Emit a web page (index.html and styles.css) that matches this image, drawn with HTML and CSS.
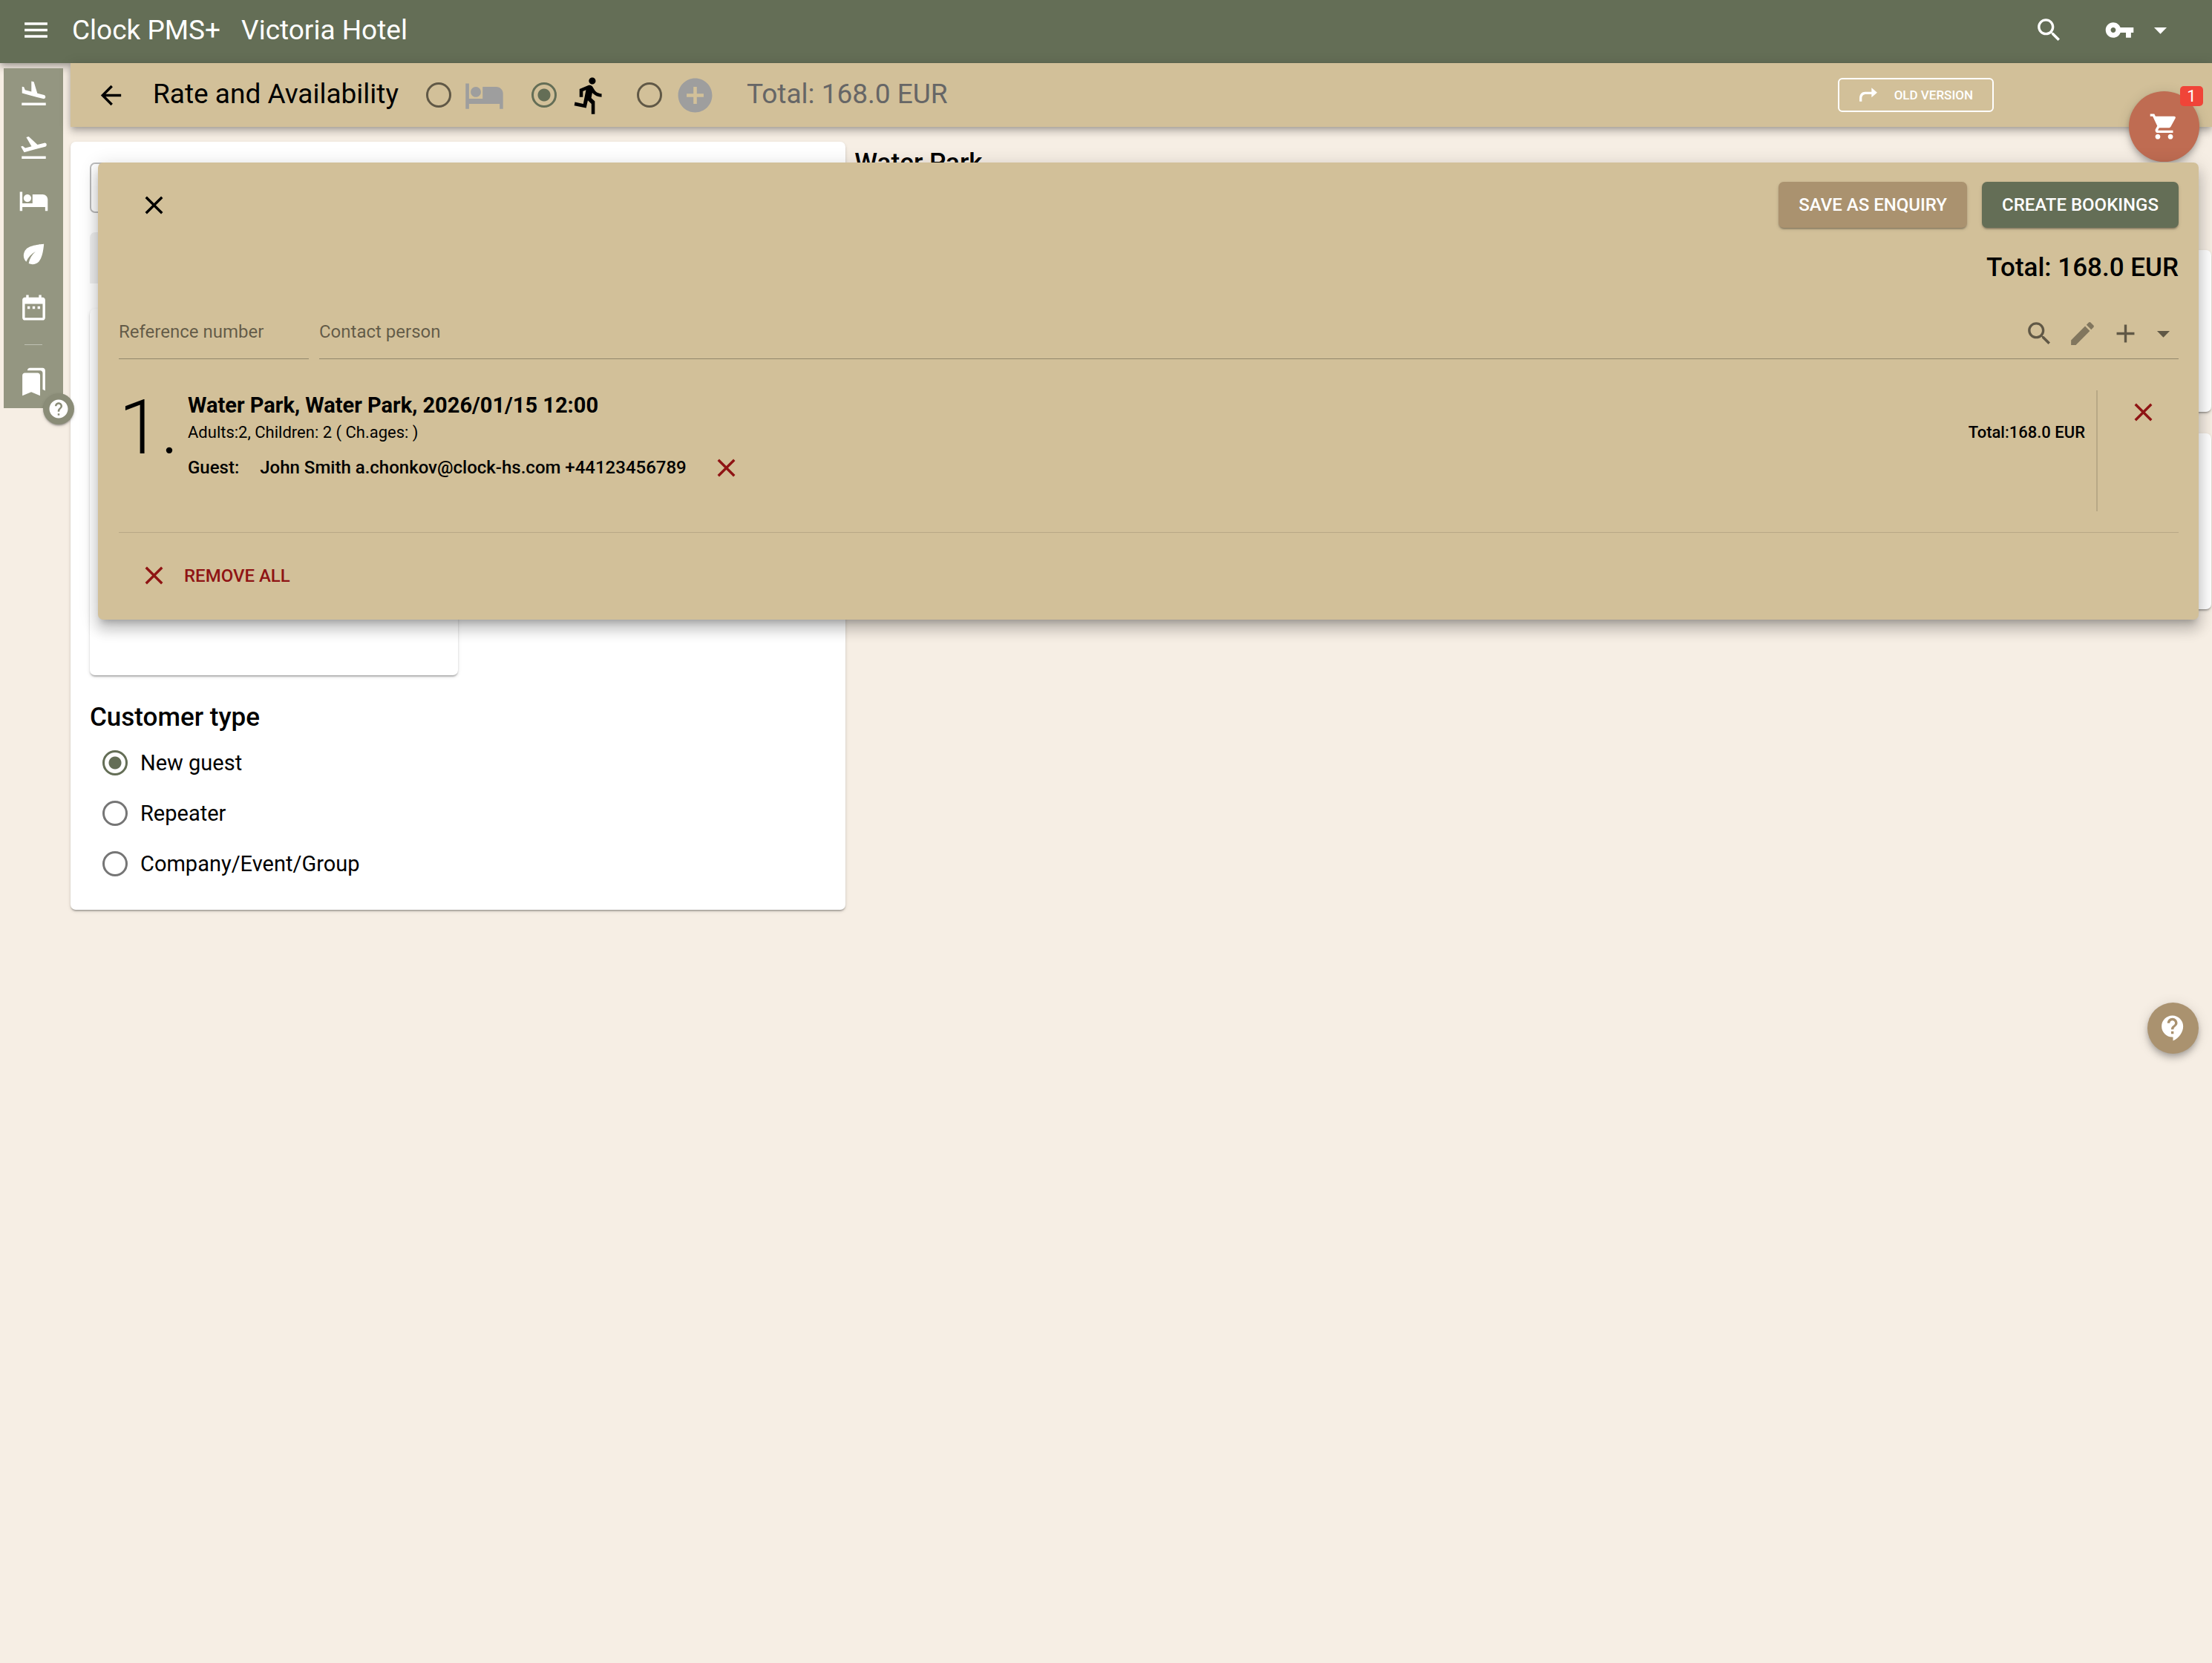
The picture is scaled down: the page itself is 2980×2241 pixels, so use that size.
FILE: index.html
```html
<!DOCTYPE html>
<html lang="en">
<head>
    <meta charset="UTF-8">
    <meta name="viewport" content="width=device-width, initial-scale=1.0">
    <title>Clock PMS+ - Rate and Availability</title>
    <link rel="stylesheet" href="styles.css">
</head>
<body>
    <!-- Shared icons -->
    <svg class="sprite" aria-hidden="true">
        <symbol id="i-menu" viewBox="0 0 24 24"><path d="M3 18h18v-2H3v2zm0-5h18v-2H3v2zm0-7v2h18V6H3z"/></symbol>
        <symbol id="i-search" viewBox="0 0 24 24"><path d="M15.5 14h-.79l-.28-.27C15.41 12.59 16 11.11 16 9.5 16 5.91 13.09 3 9.5 3S3 5.91 3 9.5 5.91 16 9.5 16c1.61 0 3.09-.59 4.23-1.57l.27.28v.79l5 4.99L20.49 19l-4.99-5zm-6 0C7.01 14 5 11.99 5 9.5S7.01 5 9.5 5 14 7.01 14 9.5 11.99 14 9.5 14z"/></symbol>
        <symbol id="i-key" viewBox="0 0 24 24"><path d="M12.65 10C11.83 7.67 9.61 6 7 6c-3.31 0-6 2.69-6 6s2.69 6 6 6c2.61 0 4.83-1.67 5.65-4H17v4h4v-4h2v-4H12.65zM7 14c-1.1 0-2-.9-2-2s.9-2 2-2 2 .9 2 2-.9 2-2 2z"/></symbol>
        <symbol id="i-drop" viewBox="0 0 24 24"><path d="M7 10l5 5 5-5z"/></symbol>
        <symbol id="i-back" viewBox="0 0 24 24"><path d="M20 11H7.83l5.59-5.59L12 4l-8 8 8 8 1.41-1.41L7.83 13H20v-2z"/></symbol>
        <symbol id="i-close" viewBox="0 0 24 24"><path d="M19 6.41L17.59 5 12 10.59 6.41 5 5 6.41 10.59 12 5 17.59 6.41 19 12 13.41 17.59 19 19 17.59 13.41 12z"/></symbol>
        <symbol id="i-land" viewBox="0 0 24 24"><path d="M2.5 19h19v2h-19zm7.18-5.73l4.35 1.16 5.31 1.42c.8.21 1.62-.26 1.84-1.06.21-.8-.26-1.62-1.06-1.84l-5.31-1.42-2.76-9.02L10.12 2v8.28L5.15 8.95l-.93-2.32-1.45-.39v5.17l1.6.43 5.31 1.43z"/></symbol>
        <symbol id="i-takeoff" viewBox="0 0 24 24"><path d="M2.5 19h19v2h-19zm19.57-9.36c-.21-.8-1.04-1.28-1.84-1.06L14.92 10l-6.9-6.43-1.93.51 4.14 7.17-4.97 1.33-1.97-1.54-1.45.39 1.82 3.16.77 1.33 1.6-.43 5.31-1.42 4.35-1.16L21 11.49c.81-.23 1.28-1.05 1.07-1.85z"/></symbol>
        <symbol id="i-bed" viewBox="0 0 24 24"><path d="M7 13c1.66 0 3-1.34 3-3S8.66 7 7 7s-3 1.34-3 3 1.34 3 3 3zm12-6h-8v7H3V5H1v15h2v-3h18v3h2v-9c0-2.21-1.79-4-4-4z"/></symbol>
        <symbol id="i-run" viewBox="0 0 24 24"><path d="M13.49 5.48c1.1 0 2-.9 2-2s-.9-2-2-2-2 .9-2 2 .9 2 2 2zm-3.6 13.9l1-4.4 2.1 2v6h2v-7.5l-2.1-2 .6-3c1.3 1.5 3.3 2.5 5.5 2.5v-2c-1.9 0-3.5-1-4.3-2.4l-1-1.6c-.4-.6-1-1-1.7-1-.3 0-.5.1-.8.1l-5.2 2.2v4.7h2v-3.4l1.8-.7-1.6 8.1-4.9-1-.4 2 7 1.4z"/></symbol>
        <symbol id="i-add-circle" viewBox="0 0 24 24"><path d="M12 2C6.48 2 2 6.48 2 12s4.48 10 10 10 10-4.48 10-10S17.52 2 12 2zm5 11h-4v4h-2v-4H7v-2h4V7h2v4h4v2z"/></symbol>
        <symbol id="i-leaf" viewBox="0 0 24 24"><path d="M6.05 8.05c-2.73 2.73-2.73 7.15-.02 9.88 1.47-3.4 4.09-6.24 7.36-7.93-2.77 2.34-4.71 5.61-5.39 9.32 2.6 1.23 5.8.78 7.95-1.37C19.43 14.47 20 4 20 4S9.53 4.57 6.05 8.05z"/></symbol>
        <symbol id="i-calendar" viewBox="0 0 24 24"><path d="M9 11H7v2h2v-2zm4 0h-2v2h2v-2zm4 0h-2v2h2v-2zm2-7h-1V2h-2v2H8V2H6v2H5c-1.11 0-1.99.9-1.99 2L3 20c0 1.1.89 2 2 2h14c1.1 0 2-.9 2-2V6c0-1.1-.9-2-2-2zm0 16H5V9h14v11z"/></symbol>
        <symbol id="i-bookmarks" viewBox="0 0 24 24"><path d="M19 18l2 1V3c0-1.1-.9-2-2-2H8.99C7.89 1 7 1.9 7 3h10c1.1 0 2 .9 2 2v13zM15 5H5c-1.1 0-2 .9-2 2v16l7-3 7 3V7c0-1.1-.9-2-2-2z"/></symbol>
        <symbol id="i-help" viewBox="0 0 24 24"><path d="M12 2C6.48 2 2 6.48 2 12s4.48 10 10 10 10-4.48 10-10S17.52 2 12 2zm1 17h-2v-2h2v2zm2.07-7.75l-.9.92C13.45 12.9 13 13.5 13 15h-2v-.5c0-1.1.45-2.1 1.17-2.83l1.24-1.26c.37-.36.59-.86.59-1.41 0-1.1-.9-2-2-2s-2 .9-2 2H8c0-2.21 1.79-4 4-4s4 1.79 4 4c0 .88-.36 1.68-.93 2.25z"/></symbol>
        <symbol id="i-support" viewBox="0 0 24 24"><path d="M11.5 2C6.81 2 3 5.81 3 10.5S6.81 19 11.5 19h.5v3c4.86-2.34 8-7 8-11.5C20 5.81 16.19 2 11.5 2zm1 14.5h-2v-2h2v2zm0-3.5h-2c0-3.25 3-3 3-5 0-1.1-.9-2-2-2s-2 .9-2 2h-2c0-2.21 1.79-4 4-4s4 1.79 4 4c0 2.5-3 2.75-3 5z"/></symbol>
        <symbol id="i-cart" viewBox="0 0 24 24"><path d="M7 18c-1.1 0-1.99.9-1.99 2S5.9 22 7 22s2-.9 2-2-.9-2-2-2zM1 2v2h2l3.6 7.59-1.35 2.45c-.16.28-.25.61-.25.96 0 1.1.9 2 2 2h12v-2H7.42c-.14 0-.25-.11-.25-.25l.03-.12.9-1.63h7.45c.75 0 1.41-.41 1.75-1.03l3.58-6.49c.08-.14.12-.31.12-.48 0-.55-.45-1-1-1H5.21l-.94-2H1zm16 16c-1.1 0-1.99.9-1.99 2s.89 2 1.99 2 2-.9 2-2-.9-2-2-2z"/></symbol>
        <symbol id="i-edit" viewBox="0 0 24 24"><path d="M3 17.25V21h3.75L17.81 9.94l-3.75-3.75L3 17.25zM20.71 7.04c.39-.39.39-1.02 0-1.41l-2.34-2.34c-.39-.39-1.02-.39-1.41 0l-1.83 1.83 3.75 3.75 1.83-1.83z"/></symbol>
        <symbol id="i-add" viewBox="0 0 24 24"><path d="M19 13h-6v6h-2v-6H5v-2h6V5h2v6h6v2z"/></symbol>
        <symbol id="i-redirect" viewBox="0 0 24 24"><path d="M1 20v-4c0-5 3-8 7-8h8V3l7 6-7 6v-4H9c-3 0-5 2-5 5v4z"/></symbol>
    </svg>

    <header class="topbar">
        <button class="icon-btn" aria-label="Menu"><svg class="icon"><use href="#i-menu"/></svg></button>
        <a class="brand" href="#">Clock PMS+</a>
        <a class="brand" href="#">Victoria Hotel</a>
        <div class="topbar-actions">
            <button class="icon-btn" aria-label="Search"><svg class="icon"><use href="#i-search"/></svg></button>
            <button class="icon-btn key-btn" aria-label="Account">
                <svg class="icon"><use href="#i-key"/></svg>
                <svg class="icon"><use href="#i-drop"/></svg>
            </button>
        </div>
    </header>

    <div class="layout">
        <nav class="rail">
            <a href="#" aria-label="Arrivals"><svg class="icon"><use href="#i-land"/></svg></a>
            <a href="#" aria-label="Departures"><svg class="icon"><use href="#i-takeoff"/></svg></a>
            <a href="#" aria-label="In house"><svg class="icon"><use href="#i-bed"/></svg></a>
            <a href="#" aria-label="Housekeeping"><svg class="icon"><use href="#i-leaf"/></svg></a>
            <a href="#" aria-label="Calendar"><svg class="icon"><use href="#i-calendar"/></svg></a>
            <hr>
            <a href="#" aria-label="Bookmarks"><svg class="icon"><use href="#i-bookmarks"/></svg></a>
            <button class="rail-help" aria-label="Help"><svg class="icon"><use href="#i-help"/></svg></button>
        </nav>

        <main class="main">
            <div class="subbar">
                <button class="icon-btn" aria-label="Back"><svg class="icon"><use href="#i-back"/></svg></button>
                <h1>Rate and Availability</h1>
                <div class="modes">
                    <label class="mode"><input type="radio" name="mode" aria-label="Rooms"><svg class="icon-lg"><use href="#i-bed"/></svg></label>
                    <label class="mode active"><input type="radio" name="mode" aria-label="Activities" checked><svg class="icon-lg"><use href="#i-run"/></svg></label>
                    <label class="mode"><input type="radio" name="mode" aria-label="Extras"><svg class="icon-lg"><use href="#i-add-circle"/></svg></label>
                </div>
                <span class="subbar-total">Total: 168.0 EUR</span>
                <button class="old-version"><svg><use href="#i-redirect"/></svg>OLD VERSION</button>
            </div>

            <div class="content">
                <section class="card filters">
                    <input class="filter-date" type="text" aria-label="Date">
                    <div class="filter-chip"></div>
                    <div class="card filter-panel"></div>
                    <fieldset>
                        <legend>Customer type</legend>
                        <label><input type="radio" name="customer" checked>New guest</label>
                        <label><input type="radio" name="customer">Repeater</label>
                        <label><input type="radio" name="customer">Company/Event/Group</label>
                    </fieldset>
                </section>
                <section class="results">
                    <h2>Water Park</h2>
                    <div class="card result"></div>
                    <div class="card result"></div>
                </section>
            </div>
        </main>
    </div>

    <button class="cart" aria-label="Cart"><svg class="icon"><use href="#i-cart"/></svg></button>
    <span class="cart-count">1</span>

    <div class="dialog" role="dialog" aria-label="Bookings">
        <div class="dialog-head">
            <button class="icon-btn" aria-label="Close"><svg class="icon"><use href="#i-close"/></svg></button>
            <div class="dialog-actions">
                <button class="btn btn-secondary">SAVE AS ENQUIRY</button>
                <button class="btn btn-primary">CREATE BOOKINGS</button>
            </div>
        </div>
        <div class="dialog-total">Total: 168.0 EUR</div>

        <div class="fields">
            <div class="field field-ref">
                <input type="text" placeholder="Reference number" aria-label="Reference number">
            </div>
            <div class="field">
                <input type="text" placeholder="Contact person" aria-label="Contact person">
                <button class="icon-btn" aria-label="Find"><svg class="icon"><use href="#i-search"/></svg></button>
                <button class="icon-btn faded" aria-label="Edit"><svg class="icon"><use href="#i-edit"/></svg></button>
                <button class="icon-btn" aria-label="Add"><svg class="icon"><use href="#i-add"/></svg></button>
                <button class="icon-btn more" aria-label="More"><svg class="icon"><use href="#i-drop"/></svg></button>
            </div>
        </div>

        <div class="booking">
            <div class="booking-no">1.</div>
            <div class="booking-info">
                <h3>Water Park, Water Park, 2026/01/15 12:00</h3>
                <p class="persons">Adults:2, Children: 2 ( Ch.ages: )</p>
                <div class="guest">
                    <span>Guest:</span>
                    <a href="#">John Smith a.chonkov@clock-hs.com +44123456789</a>
                    <button class="icon-btn danger" aria-label="Remove guest"><svg class="icon"><use href="#i-close"/></svg></button>
                </div>
            </div>
            <div class="booking-total">Total:168.0 EUR</div>
            <div class="booking-remove">
                <button class="icon-btn danger" aria-label="Remove booking"><svg class="icon"><use href="#i-close"/></svg></button>
            </div>
        </div>

        <button class="remove-all danger"><svg class="icon"><use href="#i-close"/></svg>REMOVE ALL</button>
    </div>

    <button class="support" aria-label="Support"><svg class="icon"><use href="#i-support"/></svg></button>
</body>
</html>
```

FILE: styles.css
```css
:root {
    --green: #646e56;
    --rail: #949681;
    --sand: #d2c099;
    --brown: #aa926f;
    --page: #f6eee4;
    --danger: #8f1414;
    --muted: rgba(0, 0, 0, 0.54);
    --line: rgba(0, 0, 0, 0.12);
    --shadow-sm: 0 3px 2px -2px rgba(0, 0, 0, 0.2), 0 2px 2px rgba(0, 0, 0, 0.14), 0 2px 5px rgba(0, 0, 0, 0.12);
    --shadow-md: 0 3px 7px -2px rgba(0, 0, 0, 0.2), 0 7px 9px rgba(0, 0, 0, 0.14), 0 2px 17px rgba(0, 0, 0, 0.12);
    --shadow-lg: 0 8px 9px -5px rgba(0, 0, 0, 0.2), 0 14px 17px 2px rgba(0, 0, 0, 0.14), 0 5px 24px 3px rgba(0, 0, 0, 0.12);
}

* {
    box-sizing: border-box;
}

body {
    margin: 0;
    position: relative;
    min-height: 100vh;
    background-color: var(--page);
    color: #000;
    font-family: Roboto, "Liberation Sans", sans-serif;
    font-size: 24px;
}

h1, h2, h3, p {
    margin: 0;
}

a {
    color: inherit;
    text-decoration: none;
}

button {
    padding: 0;
    border: none;
    background: none;
    color: inherit;
    font-family: inherit;
    font-size: 24px;
    font-weight: 500;
    cursor: pointer;
}

svg {
    display: block;
    flex: none;
    fill: currentColor;
}

.sprite {
    position: absolute;
    width: 0;
    height: 0;
}

.icon {
    width: 41px;
    height: 41px;
}

.icon-lg {
    width: 55px;
    height: 55px;
}

.icon-btn {
    display: flex;
    align-items: center;
}

.danger {
    color: var(--danger);
}

.card {
    background-color: #fff;
    border-radius: 7px;
    box-shadow: var(--shadow-sm);
}

input[type="radio"] {
    appearance: none;
    flex: none;
    width: 34px;
    height: 34px;
    margin: 0;
    border: 3px solid var(--muted);
    border-radius: 50%;
}

input[type="radio"]:checked {
    border-color: var(--green);
    background: radial-gradient(circle, var(--green) 8px, transparent 9px);
}

/* Top bar */
.topbar {
    position: relative;
    display: flex;
    align-items: center;
    height: 85px;
    padding: 0 49px 4px 28px;
    background-color: var(--green);
    color: #fff;
    box-shadow: var(--shadow-md);
}

.brand {
    margin-left: 28px;
    font-size: 37px;
}

.topbar-actions {
    display: flex;
    gap: 54px;
    margin-left: auto;
}

.key-btn {
    gap: 14px;
}

/* Left rail */
.layout {
    display: flex;
    align-items: flex-start;
}

.rail {
    position: relative;
    display: flex;
    flex-direction: column;
    align-items: center;
    gap: 31px;
    width: 80px;
    margin: 7px 10px 0 5px;
    padding: 14px 0 15px;
    background-color: var(--rail);
    color: #fff;
}

.rail hr {
    width: 24px;
    margin: -2px 0;
    border: none;
    border-top: 1px solid rgba(255, 255, 255, 0.4);
}

.rail-help {
    position: absolute;
    right: -15px;
    bottom: -22px;
    padding: 6px;
    border-radius: 50%;
    background-color: #8a8c77;
    box-shadow: var(--shadow-sm);
}

.rail-help .icon {
    width: 30px;
    height: 30px;
}

/* Page bar */
.main {
    flex: 1;
    min-width: 0;
}

.subbar {
    position: relative;
    display: flex;
    align-items: center;
    height: 86px;
    padding: 0 294px 0 34px;
    background-color: var(--sand);
    box-shadow: var(--shadow-md);
}

.subbar h1,
.subbar-total {
    padding-bottom: 3px;
    font-size: 37px;
    font-weight: 400;
}

.subbar h1 {
    margin-left: 36px;
}

.modes {
    display: flex;
    gap: 36px;
    margin-left: 37px;
}

.mode {
    display: flex;
    align-items: center;
    gap: 17px;
    color: #9e9e9e;
}

.mode.active {
    color: #000;
}

.subbar-total {
    margin-left: 42px;
    color: #666;
}

.old-version {
    display: flex;
    align-items: center;
    gap: 22px;
    height: 46px;
    margin-left: auto;
    padding: 0 26px;
    border: 2px solid #fff;
    border-radius: 6px;
    color: #fff;
    font-size: 17px;
}

.old-version svg {
    width: 26px;
    height: 26px;
}

/* Content */
.content {
    display: grid;
    grid-template-columns: 4fr 7fr;
    align-items: start;
    gap: 12px;
    padding: 20px 1px 0 0;
}

.filters {
    padding: 28px 26px 28px;
}

.filter-date {
    display: block;
    width: 100%;
    height: 68px;
    border: 2px solid #bbb;
    border-radius: 7px;
    background-color: #fff;
}

.filter-chip {
    width: 50%;
    height: 69px;
    margin-top: 26px;
    border-radius: 7px 7px 0 0;
    background-color: #f0f0f0;
}

.filter-panel {
    width: 50%;
    height: 494px;
    margin-top: 34px;
}

.filters fieldset {
    margin: 36px 0 0;
    padding: 0;
    border: none;
}

.filters legend,
.results h2,
.dialog-total {
    padding: 0;
    font-size: 35px;
    font-weight: 500;
    line-height: 42px;
}

.filters legend {
    margin-bottom: 6px;
}

.filters label {
    display: flex;
    align-items: center;
    gap: 17px;
    height: 68px;
    padding-left: 17px;
    font-size: 29px;
}

.results h2 {
    margin-bottom: 96px;
    padding-top: 8px;
}

.result {
    height: 218px;
    margin-bottom: 29px;
}

.result:last-child {
    height: 237px;
}

/* Cart */
.cart {
    position: absolute;
    top: 123px;
    right: 17px;
    padding: 27px;
    border-radius: 50%;
    background-color: #bf6c52;
    color: #fff;
    box-shadow: var(--shadow-md);
}

.cart-count {
    position: absolute;
    top: 116px;
    right: 12px;
    width: 31px;
    border-radius: 5px;
    background-color: #f04438;
    color: #fff;
    font-size: 22px;
    line-height: 27px;
    text-align: center;
}

/* Bookings dialog */
.dialog {
    position: absolute;
    top: 219px;
    left: 132px;
    right: 18px;
    padding: 26px 27px 39px 28px;
    border-radius: 7px;
    background-color: var(--sand);
    box-shadow: var(--shadow-lg);
}

.dialog-head {
    display: flex;
    align-items: center;
    justify-content: space-between;
    padding-left: 27px;
}

.dialog-actions {
    display: flex;
    gap: 20px;
}

.btn {
    height: 62px;
    padding: 0 27px;
    border-radius: 7px;
    color: #fff;
    box-shadow: var(--shadow-sm);
}

.btn-secondary {
    background-color: var(--brown);
}

.btn-primary {
    background-color: var(--green);
}

.dialog-total {
    margin-top: 33px;
    text-align: right;
}

.fields {
    display: flex;
    gap: 14px;
    margin-top: 33px;
}

.field {
    display: flex;
    flex: 1;
    align-items: center;
    gap: 17px;
    min-width: 0;
    height: 69px;
    border-bottom: 1px solid rgba(0, 0, 0, 0.3);
    color: var(--muted);
}

.field-ref {
    flex: 0 0 256px;
}

.field input {
    flex: 1;
    min-width: 0;
    padding: 0 0 4px;
    border: none;
    outline: none;
    background: none;
    font-family: inherit;
    font-size: 24px;
}

.field input::placeholder {
    color: var(--muted);
}

.field .more {
    margin-left: -7px;
}

.faded {
    opacity: 0.7;
}

.booking {
    display: flex;
    padding: 42px 0 28px;
    border-bottom: 1px solid var(--line);
}

.booking-no {
    width: 93px;
    font-size: 102px;
    font-weight: 300;
    line-height: 100px;
}

.booking-info {
    flex: 1;
}

.booking-info h3 {
    font-size: 29px;
    font-weight: 700;
    line-height: 40px;
}

.persons {
    font-size: 22px;
    line-height: 34px;
}

.guest {
    display: flex;
    align-items: center;
    gap: 28px;
    height: 60px;
    font-weight: 500;
}

.guest .icon-btn {
    margin-left: 5px;
}

.booking-total {
    padding: 40px 15px 0;
    font-size: 22px;
    font-weight: 500;
    line-height: 34px;
}

.booking-remove {
    width: 111px;
    height: 163px;
    padding: 9px 0 0 41px;
    border-left: 2px solid var(--line);
}

.remove-all {
    display: flex;
    align-items: center;
    gap: 20px;
    margin: 37px 0 0 27px;
}

/* Support button */
.support {
    position: absolute;
    top: 1351px;
    right: 18px;
    padding: 14px;
    border-radius: 50%;
    background-color: var(--brown);
    color: #fff;
    box-shadow: var(--shadow-md);
}
```
